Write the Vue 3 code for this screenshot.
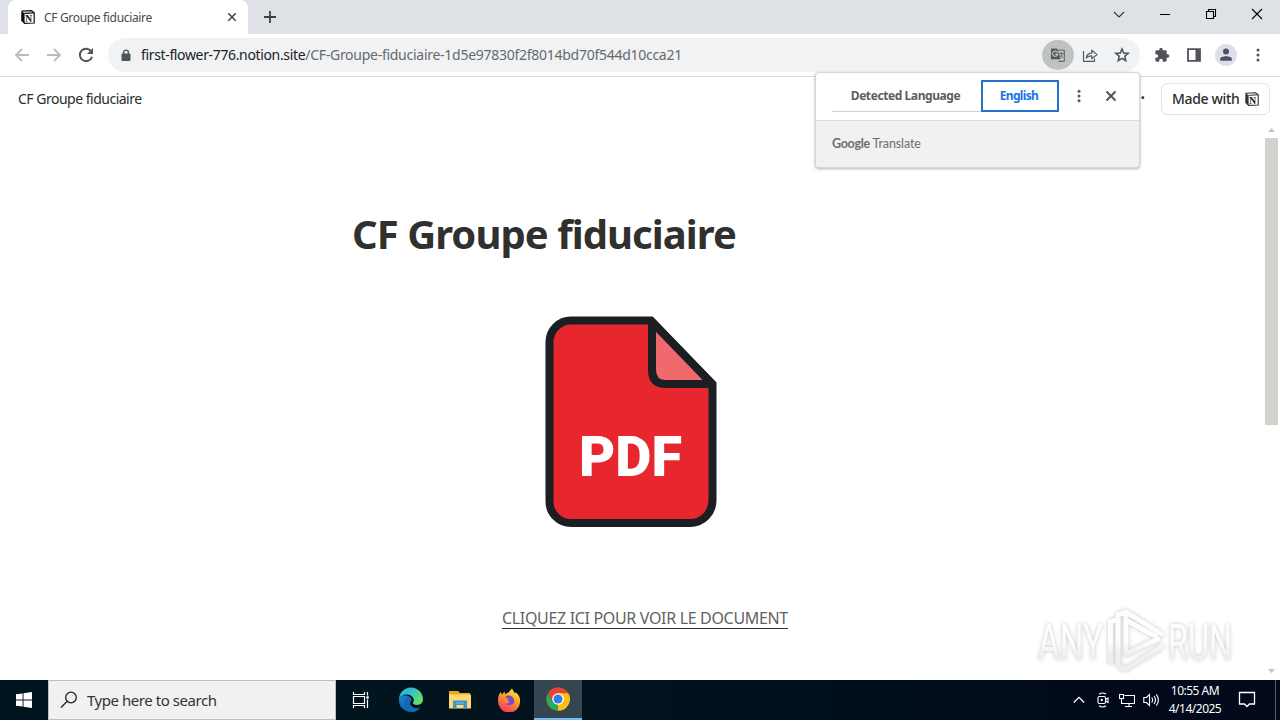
<script setup>
import { ref } from 'vue'

const title = ref('CF Groupe fiduciaire')
const host = ref('first-flower-776.notion.site')
const path = ref('/CF-Groupe-fiduciaire-1d5e97830f2f8014bd70f544d10cca21')
const search = ref('')
</script>

<template>
  <div class="screen">
    <!-- tab strip -->
    <header class="tabs">
      <div class="tab">
        <svg class="favicon" width="14" height="14" viewBox="0 0 14 14">
          <path d="M1 1.2 10.5.7 13.2 2.8V13L3.6 13.4.8 10.6Z" fill="#fff" stroke="#111" stroke-width="1.2" />
          <path d="M.8 1.3 3.6 3.4V13.4L.8 10.6Z" fill="#111" />
          <path d="M3.4 3.4 13.2 2.8" stroke="#111" stroke-width="1.2" />
          <text x="4.3" y="11.5" class="logo-n">N</text>
        </svg>
        <span class="tab-title">{{ title }}</span>
        <svg class="tab-close" width="10" height="10" viewBox="0 0 10 10"><path d="M1.3 1.3 8.7 8.7M8.7 1.3 1.3 8.7" stroke="#45494d" stroke-width="1.6" /></svg>
      </div>
      <svg class="plus" width="14" height="14" viewBox="0 0 14 14"><path d="M7 1V13M1 7H13" stroke="#3c4043" stroke-width="1.8" /></svg>
      <div class="window-buttons">
        <svg width="46" height="28" viewBox="0 0 46 28"><path d="M18 12 23 17 28 12" fill="none" stroke="#333" stroke-width="1.1" /></svg>
        <svg width="46" height="28" viewBox="0 0 46 28"><path d="M18 14.5H28" stroke="#000" /></svg>
        <svg width="46" height="28" viewBox="0 0 46 28"><path d="M18.5 11.5H25.5V18.5H18.5ZM20.5 11.5V9.5H27.5V16.5H25.5" fill="none" stroke="#000" stroke-width="1.1" /></svg>
        <svg width="46" height="28" viewBox="0 0 46 28"><path d="M18 9 28 19M28 9 18 19" stroke="#000" stroke-width="1.1" /></svg>
      </div>
    </header>

    <!-- toolbar -->
    <div class="toolbar">
      <div class="nav">
        <svg width="16" height="16" viewBox="0 0 16 16"><path d="M15 8H2M8 2 2 8 8 14" fill="none" stroke="#babcbe" stroke-width="1.8" /></svg>
        <svg width="16" height="16" viewBox="0 0 16 16"><path d="M1 8H14M8 2 14 8 8 14" fill="none" stroke="#babcbe" stroke-width="1.8" /></svg>
        <svg width="16" height="16" viewBox="0 0 16 16"><path d="M13.2 4.4A6.2 6.2 0 1 0 14 9.7" fill="none" stroke="#505357" stroke-width="2" /><path d="M15 1V7H9Z" fill="#505357" /></svg>
      </div>
      <div class="omnibox">
        <svg class="lock" width="10" height="13" viewBox="0 0 10 13"><path d="M2.6 5V3.5a2.4 2.4 0 0 1 4.8 0V5" fill="none" stroke="#505357" stroke-width="1.4" /><rect x=".5" y="4.6" width="9" height="7.4" rx="1" fill="#505357" /></svg>
        <span class="url"><b>{{ host }}</b>{{ path }}</span>
        <div class="omni-icons">
          <span class="translate-btn">
            <svg width="16" height="16" viewBox="0 0 16 16">
              <path d="M8 3.2H14.3V14.3H8.6" fill="#c6c9c8" stroke="#55595b" />
              <path d="M1 1.5H7.2L10.7 12.2H1Z" fill="#55595b" />
              <path d="M7.4 5.4A2.6 2.6 0 1 0 7.7 7.1H5.3" fill="none" stroke="#c6c9c8" stroke-width="1.1" />
              <path d="M9 6.3H13.5M11.3 5.3V6.3M12.6 6.5Q11.8 9 10.3 10.3M10.2 7.7 13 11" fill="none" stroke="#55595b" stroke-width=".9" />
            </svg>
          </span>
          <svg width="16" height="16" viewBox="0 0 16 16"><path d="M1.5 4V14.3H12.5V11.5M4.3 11Q4.5 6.4 9.8 6.2V3.2L15 7.6 9.8 11.8V8.8Q6.2 8.6 4.3 11Z" fill="none" stroke="#55595d" stroke-width="1.2" stroke-linejoin="round" /></svg>
          <svg width="16" height="16" viewBox="0 0 16 16"><path d="M8 2 9.7 6 14.2 6.4 10.8 9.3 11.8 13.7 8 11.4 4.2 13.7 5.2 9.3 1.8 6.4 6.3 6Z" fill="none" stroke="#4b4f53" stroke-width="1.5" /></svg>
        </div>
      </div>
      <div class="actions">
        <svg width="16" height="16" viewBox="0 0 24 24"><path d="M20.5 11H19V7c0-1.1-.9-2-2-2h-4V3.5a2.5 2.5 0 0 0-5 0V5H4c-1.1 0-2 .9-2 2v3.8h1.5a2.7 2.7 0 0 1 0 5.4H2V20c0 1.1.9 2 2 2h3.8v-1.5a2.7 2.7 0 0 1 5.4 0V22H17c1.1 0 2-.9 2-2v-4h1.5a2.5 2.5 0 0 0 0-5Z" fill="#505357" /></svg>
        <svg width="16" height="16" viewBox="0 0 16 16"><path d="M2 2.2H14V13.8H2Z" fill="none" stroke="#505357" stroke-width="1.8" /><path d="M9.5 2H14V14H9.5Z" fill="#505357" /></svg>
        <span class="avatar"><svg width="14" height="14" viewBox="0 0 14 14"><circle cx="7" cy="3.6" r="3" fill="#4a5168" /><path d="M1.2 12.8V11C1.2 7.3 12.8 7.3 12.8 11V12.8Z" fill="#4a5168" /></svg></span>
        <svg width="4" height="16" viewBox="0 0 4 16" fill="#505357"><circle cx="2" cy="3" r="1.5" /><circle cx="2" cy="8" r="1.5" /><circle cx="2" cy="13" r="1.5" /></svg>
      </div>
    </div>

    <!-- notion page -->
    <main class="page">
      <div class="topbar">
        <span class="crumb">{{ title }}</span>
        <span class="more">·</span>
        <a class="made">
          <span>Made with</span>
          <svg width="14" height="14" viewBox="0 0 14 14">
            <path d="M1 1.2 10.5.7 13.2 2.8V13L3.6 13.4.8 10.6Z" fill="#fff" stroke="#333" stroke-width="1.1" />
            <path d="M.8 1.3 3.6 3.4V13.4L.8 10.6Z" fill="#333" />
            <path d="M3.4 3.4 13.2 2.8" stroke="#333" />
            <text x="4.3" y="11.5" class="logo-n">N</text>
          </svg>
        </a>
      </div>
      <div class="body">
        <article>
          <h1>{{ title }}</h1>
          <svg class="pdf" width="172" height="212" viewBox="0 0 172 212">
            <path d="M26 4.5H106L167.5 68V184A22.5 22.5 0 0 1 145 207H26A21.5 21.5 0 0 1 4.5 185V26A21.5 21.5 0 0 1 26 4.5Z" fill="#e7272d" stroke="#1b1f24" stroke-width="8" />
            <path d="M107 6V54Q107 68 121 68H167Z" fill="#ef696d" stroke="#1b1f24" stroke-width="8" stroke-linejoin="round" />
            <text x="34" y="159.5" textLength="103" lengthAdjust="spacingAndGlyphs">PDF</text>
          </svg>
          <a class="doc-link">CLIQUEZ ICI POUR VOIR LE DOCUMENT</a>
        </article>
        <div class="scrollbar">
          <svg width="7" height="4" viewBox="0 0 7 4"><path d="M0 4 3.5 0 7 4Z" fill="#c4c4be" /></svg>
          <i></i>
          <svg class="down" width="7" height="4" viewBox="0 0 7 4"><path d="M0 0H7L3.5 4Z" fill="#c4c4c4" /></svg>
        </div>
      </div>
    </main>

    <!-- taskbar -->
    <footer class="taskbar">
      <div class="start">
        <svg width="16" height="16" viewBox="0 0 16 16" fill="#fff"><path d="M0 2.3 6.6 1.4V7.5H0ZM7.5 1.2 16 0V7.5H7.5ZM0 8.5H6.6V14.6L0 13.7ZM7.5 8.5H16V16L7.5 14.8Z" /></svg>
      </div>
      <label class="search">
        <svg width="18" height="18" viewBox="0 0 18 18"><circle cx="11" cy="6.5" r="5.3" fill="none" stroke="#222" stroke-width="1.3" /><path d="M7.2 10.3 1 16.5" stroke="#222" stroke-width="1.3" /></svg>
        <span v-if="!search">Type here to search</span>
      </label>
      <div class="apps">
        <span class="app task-view">
          <svg width="18" height="18" viewBox="0 0 18 18" fill="none" stroke="#fff" stroke-width="1.2"><path d="M1.5 1V3.5H12.5V1M1.5 17V14.5H12.5V17M1.5 5.5H12.5V12.5H1.5ZM15.5 1V4.5M15.5 8.5V17" /><path d="M14.3 5.3H16.7V7.7H14.3Z" fill="#fff" stroke="none" /></svg>
        </span>
        <span class="app">
          <svg width="26" height="26" viewBox="0 0 26 26">
            <defs>
              <linearGradient id="edge-top" x1="0" y1="0" x2="1" y2=".5"><stop offset="0" stop-color="#2aa7df" /><stop offset=".55" stop-color="#36c4c4" /><stop offset="1" stop-color="#67dc62" /></linearGradient>
              <linearGradient id="edge-low" x1="0" y1="0" x2=".6" y2="1"><stop offset="0" stop-color="#1688d8" /><stop offset="1" stop-color="#1159a7" /></linearGradient>
            </defs>
            <path d="M1 12.5A12 12 0 0 0 21.5 21.5C17 23 12 20 12 16Q12 14 13.5 13C13 7.5 3 7 1 12.5Z" fill="url(#edge-low)" />
            <path d="M9 9.5C5 13 6.5 22 13.5 25 18 25 21.5 22 22.5 20.5 17 22.5 12 19.5 12 16Q12 14 13.5 13Q13 10.5 9 9.5Z" fill="#1668b3" />
            <path d="M1 12.5A12 12 0 0 1 25 12.5C25 18 18 19 15.5 17 14 15.8 16 15.5 15.8 13 15.3 6.5 4 5 1 12.5Z" fill="url(#edge-top)" />
          </svg>
        </span>
        <span class="app">
          <svg width="22" height="20" viewBox="0 0 22 20"><path d="M0 1H9L11 3H21V18H0Z" fill="#e9a91f" /><path d="M0 4.5H22V18.5H0Z" fill="#ffd871" /><path d="M4 10.5H18V18.5H14.5V15H7.5V18.5H4Z" fill="#3b94d1" /><path d="M7 13H15" stroke="#75bdec" stroke-width="1" /></svg>
        </span>
        <span class="app">
          <svg width="24" height="24" viewBox="0 0 24 24">
            <defs><linearGradient id="fox" x1=".8" y1="0" x2=".3" y2="1"><stop offset="0" stop-color="#fff044" /><stop offset=".45" stop-color="#ff9a24" /><stop offset="1" stop-color="#f52f65" /></linearGradient></defs>
            <path d="M3.5 4 5 6.5 7.5 3.5 8 6 11.5 4.5 15 .5 17.5 5 19 4.5C22 7 23.5 10 23 14A11 11 0 0 1 1 13Q1 7 3.5 4Z" fill="url(#fox)" />
            <path d="M8 9Q11 6.5 15 8.5Q18.5 12 16.5 15.5Q12 19 7.5 15.5Q11 16.5 13 13.8L9.5 12.5 10.5 10.5Z" fill="#7849d0" />
            <path d="M7.5 10 12 11Q10.5 12 9.5 14Q6.5 14 7.5 10Z" fill="#ff8a20" />
          </svg>
        </span>
        <span class="app active">
          <svg width="24" height="24" viewBox="0 0 24 24">
            <path d="M12 12 2 6A11.8 11.8 0 0 1 22.4 6.2Z" fill="#e94335" />
            <path d="M12 12 22.4 6.2A11.8 11.8 0 0 1 11.5 23.8Z" fill="#fbc116" />
            <path d="M12 6.2H22.4L17.2 15 12 12Z" fill="#fbc116" />
            <path d="M1.8 6.2 7 14.8 12 12 12 6.2Z" fill="#e94335" />
            <path d="M1.8 6.2 7 15 12 17.5 11.5 23.8A11.8 11.8 0 0 1 1.8 6.2Z" fill="#31a852" />
            <circle cx="12" cy="12" r="5.8" fill="#fff" /><circle cx="12" cy="12" r="4.5" fill="#327be8" />
          </svg>
        </span>
      </div>
      <div class="tray">
        <svg width="12" height="16" viewBox="0 0 12 16"><path d="M.8 10.5 6 5.3 11.2 10.5" fill="none" stroke="#fff" stroke-width="1.3" /></svg>
        <svg width="12" height="16" viewBox="0 0 12 16" fill="none" stroke="#fff" stroke-width="1.1"><rect x="1" y="4.5" width="7.5" height="7" rx="1.5" /><path d="M8.5 7.5 11 6V10.5L8.5 9M2 2.2Q5.5-.3 9 2.2M2 13.8Q5.5 16.3 9 13.8" /><circle cx="4.8" cy="8" r=".6" fill="#fff" /></svg>
        <svg width="16" height="16" viewBox="0 0 16 16" fill="none" stroke="#fff" stroke-width="1.1"><path d="M5.5 3.5H15.5V11.5H3.5M10 11.5V14.5M6 14.5H13M.5 2.5H4.5V6.5H.5ZM2.5 6.5V11.5H4.5" /></svg>
        <svg width="17" height="16" viewBox="0 0 17 16" fill="none" stroke="#fff" stroke-width="1.1"><path d="M.8 5.5H3.5L6.5 2.5V13.5L3.5 10.5H.8ZM8.7 5.5Q10.5 8 8.7 10.5M11 4Q14 8 11 12M13.3 2.3Q17.5 8 13.3 13.7" /></svg>
      </div>
      <div class="clock"><span>10:55 AM</span><span>4/14/2025</span></div>
      <svg class="notice" width="18" height="18" viewBox="0 0 18 18"><path d="M1.5 1.5H16.5V13H11.5L9 15.5 6.5 13H1.5Z" fill="none" stroke="#fff" stroke-width="1.3" /></svg>
      <i class="peek"></i>
    </footer>

    <!-- translate bubble, hangs off the omnibox -->
    <section class="bubble">
      <div class="bubble-top">
        <span class="lang">Detected Language</span>
        <span class="lang on">English</span>
        <svg class="dots" width="4" height="14" viewBox="0 0 4 14" fill="#55585c"><circle cx="2" cy="2.2" r="1.5" /><circle cx="2" cy="7" r="1.5" /><circle cx="2" cy="11.8" r="1.5" /></svg>
        <svg class="close" width="12" height="12" viewBox="0 0 12 12"><path d="M1.5 1.5 10.5 10.5M10.5 1.5 1.5 10.5" stroke="#505357" stroke-width="1.9" /></svg>
      </div>
      <div class="bubble-foot"><b>Google</b> Translate</div>
    </section>

    <!-- recorder watermark -->
    <svg class="watermark" width="244" height="74" viewBox="0 0 244 74">
      <defs>
        <linearGradient id="wm" x1="0" y1="0" x2="0" y2="1"><stop offset=".5" stop-color="#fdfdfd" /><stop offset=".75" stop-color="#ededed" /></linearGradient>
      </defs>
      <text x="4" y="55" textLength="65" lengthAdjust="spacingAndGlyphs">ANY</text>
      <path d="M76.5 59V17L84 14M84 61V10L92 7 129 30M92 7V49L126 33M92 15 123 32M84 61 92 64 129 41" />
      <text x="134" y="55" textLength="64" lengthAdjust="spacingAndGlyphs">RUN</text>
    </svg>
  </div>
</template>

<style>
body {
  overflow: hidden;
}
</style>

<style scoped>
* {
  box-sizing: border-box;
}

.screen {
  position: relative;
  display: flex;
  flex-direction: column;
  width: 1280px;
  height: 720px;
  overflow: hidden;
  background: #fff;
  font-family: "Noto Sans", "Open Sans", sans-serif;
}

svg {
  flex: none;
  display: block;
}

.logo-n {
  font: bold 9.5px "Liberation Serif", serif;
  fill: #111;
}

/* tab strip */
.tabs {
  display: flex;
  height: 34px;
  padding-left: 8px;
  background: #dee1e6;
}

.tab {
  display: flex;
  align-items: center;
  width: 240px;
  padding: 0 11px 0 13px;
  border-radius: 8px 8px 0 0;
  background: #fff;
}

.tab-title {
  flex: 1;
  margin-left: 9px;
  font-size: 12px;
  letter-spacing: -0.33px;
  color: #45494d;
}

.plus {
  margin: 10px 0 0 15px;
}

.window-buttons {
  display: flex;
  margin-left: auto;
}

/* toolbar */
.toolbar {
  display: flex;
  align-items: center;
  height: 43px;
  padding: 0 20px 0 14px;
  border-bottom: 1px solid #d8dadd;
}

.nav {
  display: flex;
  gap: 16px;
  width: 94px;
}

.omnibox {
  display: flex;
  align-items: center;
  width: 1032px;
  height: 34px;
  padding: 0 10px 0 13px;
  border-radius: 17px;
  background: #f0f2f4;
}

.url {
  margin-left: 10px;
  padding-bottom: 1px;
  font-size: 14px;
  letter-spacing: -0.27px;
  color: #666a6e;
}

.url b {
  font-weight: 400;
  letter-spacing: -0.35px;
  color: #202124;
}

.omni-icons {
  display: flex;
  align-items: center;
  gap: 16px;
  margin-left: auto;
}

.translate-btn {
  display: flex;
  align-items: center;
  justify-content: center;
  width: 32px;
  height: 30px;
  margin-right: -8px;
  border-radius: 50%;
  background: #bfc2c1;
}

.actions {
  display: flex;
  align-items: center;
  gap: 16px;
  margin-left: 14px;
}

.avatar {
  display: flex;
  align-items: center;
  justify-content: center;
  width: 22px;
  height: 22px;
  margin: 0 3px 0 -3px;
  border-radius: 50%;
  background: #dddfe9;
}

/* page */
.page {
  display: flex;
  flex-direction: column;
  flex: 1;
}

.topbar {
  display: flex;
  align-items: center;
  height: 44px;
  padding: 0 10px 0 18px;
  color: #2c2c2b;
}

.crumb {
  flex: 1;
  padding-bottom: 1px;
  font-size: 14px;
  letter-spacing: -0.5px;
}

.more {
  margin: -5px 16px 0 0;
  font-weight: 700;
  font-size: 16px;
}

.made {
  display: flex;
  align-items: center;
  justify-content: space-between;
  width: 109px;
  height: 32px;
  padding: 0 10px;
  border: 1px solid #e4e4e2;
  border-radius: 6px;
  font-size: 14px;
  font-weight: 500;
  letter-spacing: -0.32px;
  white-space: nowrap;
}

.made span {
  padding-bottom: 1px;
}

.body {
  display: flex;
  flex: 1;
}

article {
  display: flex;
  flex-direction: column;
  flex: 1;
  padding: 86px 0 0 352px;
}

h1 {
  margin: 0;
  font-size: 40px;
  line-height: 54px;
  font-weight: 700;
  letter-spacing: -0.95px;
  white-space: nowrap;
  color: #30302e;
}

.pdf {
  margin: 55px 0 0 193px;
}

.pdf text {
  font: 900 56px Roboto, sans-serif;
  fill: #fff;
}

.doc-link {
  align-self: flex-start;
  margin: 80px 0 0 150px;
  border-bottom: 1px solid #333;
  font-size: 16px;
  line-height: 20px;
  letter-spacing: -0.33px;
  white-space: nowrap;
  color: #626260;
}

.scrollbar {
  display: flex;
  flex-direction: column;
  align-items: center;
  width: 17px;
  padding: 7px 2px 7px 1px;
}

.scrollbar i {
  width: 13px;
  height: 287px;
  margin-top: 6px;
  background: #d2d2cd;
}

.scrollbar .down {
  margin-top: auto;
}

/* taskbar */
.taskbar {
  display: flex;
  height: 40px;
  background: linear-gradient(90deg, #00161f, #01131d 50%, #01091b 90%);
  color: #fff;
}

.start {
  display: flex;
  align-items: center;
  justify-content: center;
  width: 48px;
}

.search {
  display: flex;
  align-items: center;
  gap: 9px;
  width: 288px;
  padding-left: 11px;
  border: 1px solid #bebebe;
  background: #f1f1f1;
  font-size: 15px;
  letter-spacing: -0.45px;
  color: #333;
}

.apps {
  display: flex;
}

.app {
  display: flex;
  align-items: center;
  justify-content: center;
  width: 49px;
}

.app.task-view {
  width: 49px;
  margin-right: 1px;
}

.app.active {
  width: 48px;
  margin-left: 1px;
  border-bottom: 2px solid #76b9ed;
  background: #344650;
}

.tray {
  display: grid;
  grid-template-columns: repeat(4, 24px);
  align-items: center;
  justify-items: center;
  margin-left: auto;
}

.clock {
  display: flex;
  flex-direction: column;
  align-items: center;
  width: 64px;
  padding-top: 2px;
  font-size: 12px;
  line-height: 18px;
  letter-spacing: -0.5px;
}

.notice {
  margin: 11px 19px 0 11px;
}

.peek {
  width: 5px;
  border-left: 1px solid #53606b;
}

/* translate bubble */
.bubble {
  position: absolute;
  left: 815px;
  top: 72px;
  width: 325px;
  height: 96px;
  border: 1px solid #d5d5d5;
  border-radius: 4px;
  background: #fff;
  box-shadow: 0 1px 3px rgba(0, 0, 0, 0.3);
}

.bubble-top {
  display: flex;
  align-items: center;
  height: 48px;
  padding: 0 0 2px 16px;
  border-bottom: 1px solid #dadada;
}

.lang {
  width: 149px;
  height: 32px;
  padding-right: 2px;
  border-bottom: 1px solid #d0d0d0;
  font-size: 12px;
  line-height: 32px;
  font-weight: 700;
  letter-spacing: -0.42px;
  text-align: center;
  white-space: nowrap;
  color: #5b5e61;
}

.lang.on {
  width: 78px;
  border: 2px solid #256fd0;
  line-height: 28px;
  letter-spacing: -0.65px;
  color: #1a73e8;
}

.dots {
  margin: 1px 24px 0 18px;
}

.close {
  margin-top: 1px;
}

.bubble-foot {
  height: 46px;
  padding-left: 16px;
  border-radius: 0 0 4px 4px;
  background: #f1f1f1;
  font: 12.5px/46px Lato, sans-serif;
  letter-spacing: -0.12px;
  color: #6b6e71;
}

.bubble-foot b {
  font-weight: 700;
  letter-spacing: -0.3px;
}

.watermark {
  position: absolute;
  left: 1034px;
  top: 605px;
  opacity: 0.9;
  filter: drop-shadow(0 0 2px rgba(0, 0, 0, 0.25));
}

.watermark text {
  font: 50px Roboto, sans-serif;
  fill: url(#wm);
}

.watermark path {
  fill: none;
  stroke: url(#wm);
  stroke-width: 5;
}
</style>
